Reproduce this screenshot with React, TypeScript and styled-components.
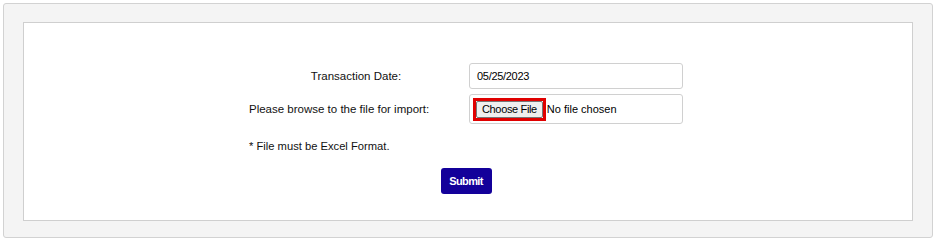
import React from 'react';
import styled, { createGlobalStyle } from 'styled-components';

const GlobalStyle = createGlobalStyle`
  html, body {
    margin: 0;
    padding: 0;
    background: #ffffff;
    font-family: "Liberation Sans", Arial, sans-serif;
  }
`;

const Page = styled.div`
  padding: 3px 3px 2px 3px;
`;

const OuterPanel = styled.div`
  background: #f4f4f4;
  border: 1px solid #d2d2d2;
  border-radius: 3px;
  padding: 18px 19px 18px 19px;
  height: 235px;
  box-sizing: border-box;
  width: 930px;
`;

const InnerPanel = styled.div`
  background: #ffffff;
  border: 1px solid #cfcfcf;
  height: 199px;
  box-sizing: border-box;
  padding-top: 40px;
  display: flex;
  flex-direction: column;
  align-items: center;
`;

const FormBlock = styled.div`
  width: 434px;
  margin-right: 4px;
  display: flex;
  flex-direction: column;
`;

const FormGrid = styled.div`
  display: grid;
  grid-template-columns: 214px 214px;
  grid-template-rows: 26px 30px;
  column-gap: 6px;
  row-gap: 5px;
  align-items: center;
`;

const Label = styled.div<{ $left?: boolean }>`
  font-size: 11.5px;
  color: #111;
  text-align: ${p => (p.$left ? 'left' : 'center')};
  white-space: nowrap;
`;

const Field = styled.div<{ $tall?: boolean }>`
  height: ${p => (p.$tall ? '30px' : '26px')};
  box-sizing: border-box;
  border: 1px solid #d0d0d0;
  border-radius: 3px;
  display: flex;
  align-items: center;
  padding-left: ${p => (p.$tall ? '3px' : '7px')};
  font-size: 11px;
  letter-spacing: ${p => (p.$tall ? '0' : '-0.3px')};
  color: #000;
`;

const FocusRing = styled.span`
  display: inline-flex;
  border: 3px solid #e00000;
`;

const FileButton = styled.span`
  display: inline-flex;
  align-items: center;
  height: 17px;
  box-sizing: border-box;
  padding: 0 5px;
  background: #efefef;
  border: 1px solid #767676;
  border-radius: 2px;
  font-size: 11px;
  letter-spacing: -0.35px;
  color: #000;
`;

const FileStatus = styled.span`
  margin-left: 1px;
  font-size: 11px;
  color: #000;
`;

const Note = styled.div`
  margin-top: 15px;
  font-size: 11.2px;
  line-height: 14px;
  color: #111;
`;

const SubmitButton = styled.button`
  align-self: center;
  margin-top: 15px;
  width: 51px;
  height: 26px;
  background: #13009a;
  color: #fff;
  border: none;
  border-radius: 3px;
  font-family: "Liberation Sans", Arial, sans-serif;
  font-weight: bold;
  font-size: 11px;
  letter-spacing: -0.6px;
  padding: 0;
  cursor: pointer;
`;

export default function App() {
  return (
    <>
      <GlobalStyle />
      <Page>
        <OuterPanel>
          <InnerPanel>
            <FormBlock>
              <FormGrid>
                <Label>Transaction Date:</Label>
                <Field>05/25/2023</Field>
                <Label $left>Please browse to the file for import:</Label>
                <Field $tall>
                  <FocusRing>
                    <FileButton>Choose File</FileButton>
                  </FocusRing>
                  <FileStatus>No file chosen</FileStatus>
                </Field>
              </FormGrid>
              <Note>* File must be Excel Format.</Note>
              <SubmitButton>Submit</SubmitButton>
            </FormBlock>
          </InnerPanel>
        </OuterPanel>
      </Page>
    </>
  );
}
